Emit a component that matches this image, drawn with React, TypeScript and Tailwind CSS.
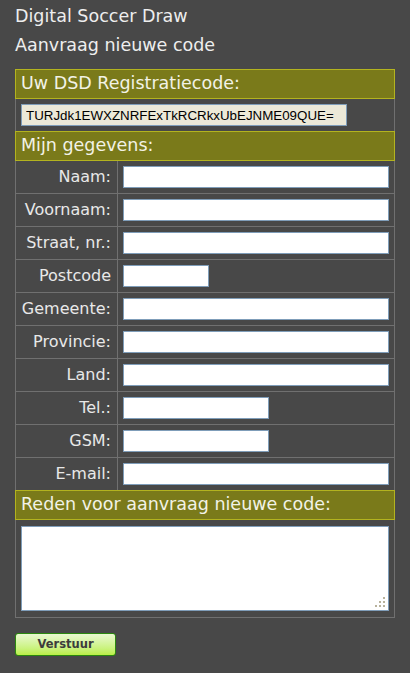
import React from 'react';

const velden = [
  { label: 'Naam:', breedte: 'w-[266px]' },
  { label: 'Voornaam:', breedte: 'w-[266px]' },
  { label: 'Straat, nr.:', breedte: 'w-[266px]' },
  { label: 'Postcode', breedte: 'w-[86px]' },
  { label: 'Gemeente:', breedte: 'w-[266px]' },
  { label: 'Provincie:', breedte: 'w-[266px]' },
  { label: 'Land:', breedte: 'w-[266px]' },
  { label: 'Tel.:', breedte: 'w-[146px]' },
  { label: 'GSM:', breedte: 'w-[146px]' },
  { label: 'E-mail:', breedte: 'w-[266px]' },
];

function Kop({ children }: { children: React.ReactNode }) {
  return (
    <div className="h-[30px] -mx-px border border-[#b3b31f] bg-[#7a7a1a] pl-[5px] flex items-center text-[17.5px] text-[#f2f2e6] leading-none">
      {children}
    </div>
  );
}

const App = () => {
  return (
    <div
      className="w-[410px] h-[673px] bg-[#484848] px-[15px] pt-[6px] text-[#eeeeee]"
      style={{ fontFamily: '"DejaVu Sans", Verdana, sans-serif' }}
    >
      <div className="text-[17.5px] leading-[20px]">Digital Soccer Draw</div>
      <div className="text-[17.5px] leading-[20px] mt-[9px]">Aanvraag nieuwe code</div>

      <div className="mt-[14px] w-[380px] border-x border-b border-[#707070]">
        <Kop>Uw DSD Registratiecode:</Kop>
        <div className="h-[32px] flex items-center pl-[5px]">
          <input
            readOnly
            value="TURJdk1EWXZNRFExTkRCRkxUbEJNME09QUE="
            className="w-[326px] h-[22px] border border-[#7f9db9] bg-[#ece9d8] px-[4px] text-[13.333px] text-black outline-none"
            style={{ fontFamily: '"Liberation Sans", Arial, sans-serif' }}
          />
        </div>

        <Kop>Mijn gegevens:</Kop>
        {velden.map((v, i) => (
          <div
            key={v.label}
            className={
              i < velden.length - 1
                ? 'flex h-[33px] border-b border-[#707070]'
                : 'flex h-[32px]'
            }
          >
            <div className="w-[102px] border-r border-[#707070] pr-[6px] flex items-center justify-end text-[16px] text-[#e8e8e8]">
              {v.label}
            </div>
            <div className="flex-1 flex items-center pl-[5px]">
              <input
                className={`${v.breedte} h-[22px] border border-[#7f9db9] bg-white outline-none`}
              />
            </div>
          </div>
        ))}

        <Kop>Reden voor aanvraag nieuwe code:</Kop>
        <div className="h-[97px] pt-[6px] pl-[5px]">
          <div className="relative w-[368px] h-[85px]">
            <textarea className="w-full h-full border border-[#7f9db9] bg-white resize-none outline-none block" />
            <svg
              className="absolute right-[4px] bottom-[4px]"
              width="10"
              height="10"
              viewBox="0 0 10 10"
            >
              <rect x="8" y="0" width="2" height="2" fill="#b8b29c" />
              <rect x="4" y="4" width="2" height="2" fill="#b8b29c" />
              <rect x="8" y="4" width="2" height="2" fill="#b8b29c" />
              <rect x="0" y="8" width="2" height="2" fill="#b8b29c" />
              <rect x="4" y="8" width="2" height="2" fill="#b8b29c" />
              <rect x="8" y="8" width="2" height="2" fill="#b8b29c" />
            </svg>
          </div>
        </div>
      </div>

      <button className="mt-[15px] w-[101px] h-[23px] rounded-[3px] border border-[#2a880e] bg-gradient-to-b from-[#eaf8d0] to-[#bbef45] text-[11.5px] font-bold text-[#3c3c3c] flex items-center justify-center">
        Verstuur
      </button>
    </div>
  );
};

export default App;
